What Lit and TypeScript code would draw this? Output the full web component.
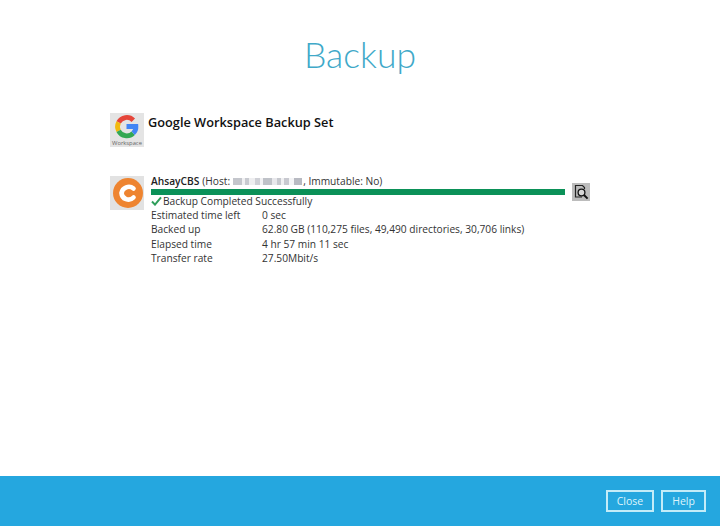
import { LitElement, html, css } from 'lit';
import { customElement } from 'lit/decorators.js';

const stats = [
  ['Estimated time left', '0 sec'],
  ['Backed up', '62.80 GB (110,275 files, 49,490 directories, 30,706 links)'],
  ['Elapsed time', '4 hr 57 min 11 sec'],
  ['Transfer rate', '27.50Mbit/s'],
];

// masked host address, pairs of width and grey
const hostBlocks = [
  [9, '#c4c6cc'], [3, '#f0f0f2'], [4, '#c8cad0'], [6, '#eeeef0'], [5, '#cfd0d6'],
  [3, '#f2f2f4'], [9, '#bfc2c8'], [5, '#e8e8ec'], [4, '#c6c8ce'], [3, '#f0f0f2'], [5, '#c8c9d0'],
  [5, '#f4f4f6'], [8, '#b8bac2'],
];

@customElement('app-root')
export class AppRoot extends LitElement {
  static styles = css`
    :host {
      display: block;
      font-family: 'Open Sans', sans-serif;
      color: #222;
    }

    .page {
      display: flex;
      flex-direction: column;
      height: 526px;
      background: #fff;
    }

    .main {
      flex: 1;
      padding: 33px 130px 0 110px;
    }

    .title {
      margin: 0 -130px 0 -110px;
      font-family: 'Lato', sans-serif;
      font-weight: 300;
      font-size: 35.5px;
      line-height: 44px;
      text-align: center;
      color: #3fa9c9;
    }

    .set {
      display: flex;
      gap: 4px;
      margin-top: 36px;
      height: 34px;
    }

    .logo {
      flex: none;
      width: 34px;
      height: 34px;
      display: block;
    }

    .set-name {
      font-size: 12.75px;
      font-weight: 600;
      line-height: 18px;
      color: #111;
    }

    .dest {
      display: flex;
      margin-top: 29px;
    }

    .dest-body {
      flex: 1;
      margin-left: 7px;
      font-size: 10.2px;
      line-height: 14.25px;
      color: #333;
    }

    .head {
      display: flex;
      align-items: center;
      height: 11px;
      white-space: pre;
    }

    .head b {
      font-weight: 600;
      color: #222;
      margin-right: 3px;
    }

    .host {
      display: inline-flex;
      height: 7px;
      margin: 0 1px 0 3px;
      filter: blur(0.7px);
    }

    .progress-row {
      display: flex;
      gap: 7px;
      height: 8px;
      margin-top: 2px;
    }

    .bar {
      flex: 1;
      height: 6px;
      background: #0b9158;
    }

    .inspect {
      flex: none;
      width: 18px;
      height: 18px;
      margin-top: -6px;
      display: block;
    }

    .status {
      display: flex;
      align-items: center;
      gap: 1px;
      height: 14px;
      margin-top: -3px;
      padding-top: 0;
    }

    .stats {
      display: grid;
      grid-template-columns: 111px 1fr;
    }

    .footer {
      flex: none;
      display: flex;
      justify-content: flex-end;
      align-items: center;
      gap: 7px;
      height: 50px;
      padding: 0 14px 0 0;
      background: #25a7df;
    }

    .btn {
      box-sizing: border-box;
      height: 22px;
      margin-top: -1px;
      padding: 0;
      border: 2px solid #c4ecf8;
      background: transparent;
      color: #dff5fb;
      font: 500 10.5px 'Open Sans', sans-serif;
    }

    .close { width: 48px; }
    .help { width: 45px; }
  `;

  render() {
    return html`
      <div class="page">
        <div class="main">
          <h1 class="title">Backup</h1>
          <div class="set">
            <svg class="logo" viewBox="0 0 34 34">
              <rect width="34" height="34" fill="#e4e4e4" />
              <g fill="none" stroke-width="4.8">
                <path d="M23.3 7.2A9.2 9.2 0 0 0 8.6 9.4" stroke="#e5463a" />
                <path d="M8.6 9.4a9.2 9.2 0 0 0 0 8.4" stroke="#f2b90f" />
                <path d="M8.6 17.8a9.2 9.2 0 0 0 14.6 2.4" stroke="#33a853" />
                <path d="M23.2 20.2c1.9-1.7 2.9-3.8 2.7-6.7H16.5" stroke="#4285f4" />
              </g>
              <text x="17" y="32" text-anchor="middle" font-size="5.8" font-family="Open Sans" fill="#666">Workspace</text>
            </svg>
            <div class="set-name">Google Workspace Backup Set</div>
          </div>
          <div class="dest">
            <svg class="logo" viewBox="0 0 34 34">
              <rect width="34" height="34" fill="#e2e2e2" />
              <circle cx="18" cy="17" r="15" fill="#ee8430" />
              <path d="M23.5 12.5A7.4 7.4 0 0 0 11.5 17 7 7 0 0 0 23.5 21.5" fill="none" stroke="#fff" stroke-width="4.6" stroke-linecap="round" />
            </svg>
            <div class="dest-body">
              <div class="head">
                <b>AhsayCBS</b><span>(Host:</span>
                <span class="host">
                  ${hostBlocks.map(([w, c]) => html`<i style="width:${w}px;background:${c}"></i>`)}
                </span><span>, Immutable: No)</span>
              </div>
              <div class="progress-row">
                <div class="bar"></div>
                <svg class="inspect" viewBox="0 0 18 18">
                  <rect width="18" height="18" fill="#bcbcbc" />
                  <path d="M10 14H3.5V2.5H10.5L12.5 4.5V6" fill="none" stroke="#222" stroke-width="1.2" />
                  <circle cx="9.5" cy="9.5" r="3.4" fill="#d6d6d6" stroke="#111" stroke-width="1.3" />
                  <path d="M12 12l3.6 3.6" stroke="#111" stroke-width="2" />
                </svg>
              </div>
              <div class="status">
                <svg width="11" height="10" viewBox="0 0 11 10">
                  <path d="M1 5.5L4 8.6 10 1.4" fill="none" stroke="#2f9e5b" stroke-width="2" />
                </svg>
                <span>Backup Completed Successfully</span>
              </div>
              <div class="stats">
                ${stats.map(([k, v]) => html`<span>${k}</span><span>${v}</span>`)}
              </div>
            </div>
          </div>
        </div>
        <div class="footer">
          <button class="btn close">Close</button>
          <button class="btn help">Help</button>
        </div>
      </div>
    `;
  }
}
